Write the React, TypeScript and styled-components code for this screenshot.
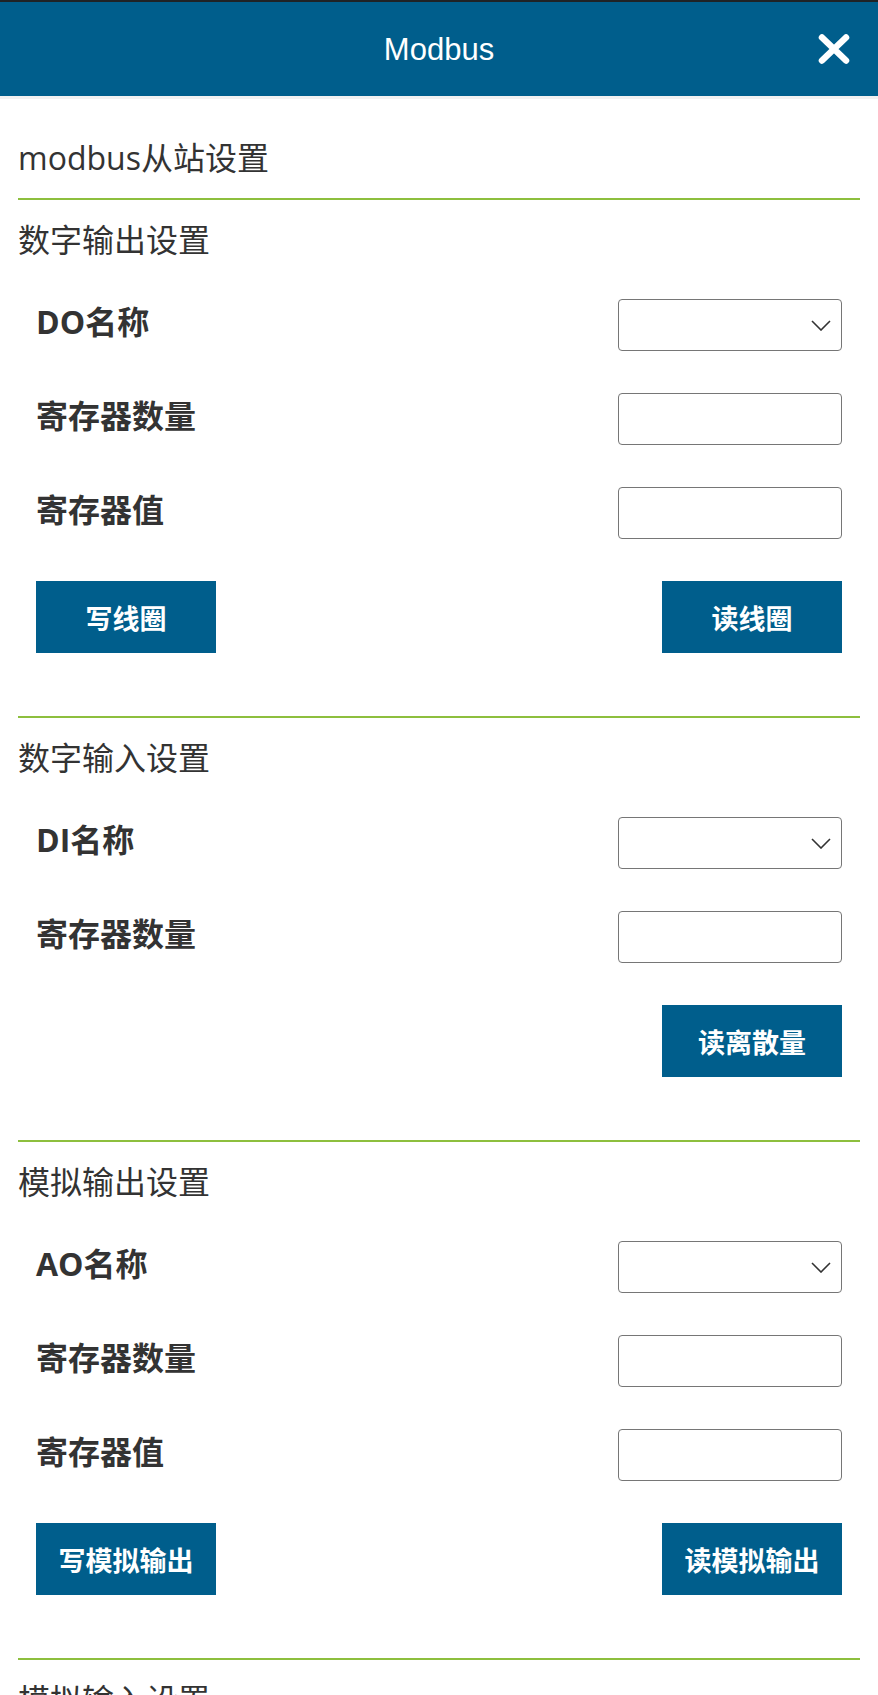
import React from 'react';
import styled, { createGlobalStyle } from 'styled-components';

const GlobalStyle = createGlobalStyle`
  html, body {
    margin: 0;
    padding: 0;
    background: #ffffff;
  }
  body {
    font-family: "Open Sans", "Noto Sans CJK SC", sans-serif;
    color: #333333;
  }
  * {
    box-sizing: border-box;
  }
`;

const TopStrip = styled.div`
  height: 2px;
  background: #1f2326;
`;

const Header = styled.header`
  height: 94px;
  background: #005e8c;
  display: grid;
  grid-template-columns: 1fr auto 1fr;
  align-items: center;
  border-bottom: 3px solid #f1f1f1;
  box-sizing: content-box;
`;

const HeaderTitle = styled.h1`
  grid-column: 2;
  margin: 0;
  font-family: "Liberation Sans", Arial, sans-serif;
  font-weight: 400;
  font-size: 31px;
  color: #ffffff;
  line-height: 1;
`;

const CloseButton = styled.button`
  grid-column: 3;
  justify-self: end;
  margin-right: 28px;
  padding: 0;
  border: none;
  background: transparent;
  display: flex;
  cursor: pointer;
`;

const Main = styled.main`
  padding: 0 18px;
`;

const PageTitle = styled.h2`
  margin: 34px 0 0;
  padding-bottom: 15px;
  font-size: 32px;
  line-height: 50px;
  font-weight: 400;
  color: #333333;
`;

const Section = styled.section`
  border-top: 2px solid #8dbf3e;
  padding-bottom: 63px;
`;

const SectionTitle = styled.h3`
  margin: 15px 0 0;
  font-size: 32px;
  line-height: 50px;
  font-weight: 400;
  color: #333333;
`;

const Fields = styled.div`
  margin-top: 34px;
  padding: 0 18px;
  display: flex;
  flex-direction: column;
  gap: 42px;
`;

const Row = styled.div`
  height: 52px;
  display: flex;
  align-items: center;
  justify-content: space-between;
`;

const Label = styled.label`
  font-size: 32px;
  font-weight: 700;
  color: #333333;
  line-height: 1;
  margin-bottom: 6px;
`;

const controlBase = `
  width: 224px;
  height: 52px;
  border: 1px solid #767676;
  border-radius: 4px;
  background: #ffffff;
  font-size: 20px;
  font-family: "Open Sans", "Noto Sans CJK SC", sans-serif;
  padding: 0 10px;
  outline: none;
`;

const TextInput = styled.input`
  ${controlBase}
`;

const SelectWrap = styled.div`
  position: relative;
  width: 224px;
  height: 52px;
`;

const Select = styled.select`
  ${controlBase}
  appearance: none;
  -webkit-appearance: none;
`;

const Chevron = styled.svg`
  position: absolute;
  right: 11px;
  top: 21px;
  pointer-events: none;
`;

const ButtonRow = styled.div<{ $single?: boolean }>`
  margin-top: 42px;
  padding: 0 18px;
  display: flex;
  justify-content: ${(p) => (p.$single ? 'flex-end' : 'space-between')};
`;

const ActionButton = styled.button`
  width: 180px;
  height: 72px;
  border: none;
  border-radius: 0;
  background: #005e8c;
  color: #ffffff;
  font-family: "Noto Sans CJK SC", sans-serif;
  font-size: 27px;
  font-weight: 700;
  cursor: pointer;
  padding: 0;
`;

type Field = { label: string; kind: 'select' | 'input' };
type Group = { title: string; fields: Field[]; buttons: string[] };

const groups: Group[] = [
  {
    title: '数字输出设置',
    fields: [
      { label: 'DO名称', kind: 'select' },
      { label: '寄存器数量', kind: 'input' },
      { label: '寄存器值', kind: 'input' },
    ],
    buttons: ['写线圈', '读线圈'],
  },
  {
    title: '数字输入设置',
    fields: [
      { label: 'DI名称', kind: 'select' },
      { label: '寄存器数量', kind: 'input' },
    ],
    buttons: ['读离散量'],
  },
  {
    title: '模拟输出设置',
    fields: [
      { label: 'AO名称', kind: 'select' },
      { label: '寄存器数量', kind: 'input' },
      { label: '寄存器值', kind: 'input' },
    ],
    buttons: ['写模拟输出', '读模拟输出'],
  },
  {
    title: '模拟输入设置',
    fields: [
      { label: 'AI名称', kind: 'select' },
      { label: '寄存器数量', kind: 'input' },
    ],
    buttons: ['读模拟输入'],
  },
];

const ChevronIcon = () => (
  <Chevron width="20" height="11" viewBox="0 0 20 11">
    <polyline points="1,1 10,10 19,1" fill="none" stroke="#333333" strokeWidth="1.6" />
  </Chevron>
);

const CloseIcon = () => (
  <svg width="32" height="30" viewBox="0 0 32 30">
    <path
      d="M4 3.5 L28 26.5 M28 3.5 L4 26.5"
      fill="none"
      stroke="#ffffff"
      strokeWidth="6.5"
      strokeLinecap="round"
    />
  </svg>
);

export default function App() {
  return (
    <>
      <GlobalStyle />
      <TopStrip />
      <Header>
        <HeaderTitle>Modbus</HeaderTitle>
        <CloseButton aria-label="关闭">
          <CloseIcon />
        </CloseButton>
      </Header>
      <Main>
        <PageTitle>modbus从站设置</PageTitle>
        {groups.map((g) => (
          <Section key={g.title}>
            <SectionTitle>{g.title}</SectionTitle>
            <Fields>
              {g.fields.map((f) => (
                <Row key={f.label}>
                  <Label>{f.label}</Label>
                  {f.kind === 'select' ? (
                    <SelectWrap>
                      <Select defaultValue="">
                        <option value=""></option>
                      </Select>
                      <ChevronIcon />
                    </SelectWrap>
                  ) : (
                    <TextInput type="text" />
                  )}
                </Row>
              ))}
            </Fields>
            <ButtonRow $single={g.buttons.length === 1}>
              {g.buttons.map((b) => (
                <ActionButton key={b}>{b}</ActionButton>
              ))}
            </ButtonRow>
          </Section>
        ))}
      </Main>
    </>
  );
}
